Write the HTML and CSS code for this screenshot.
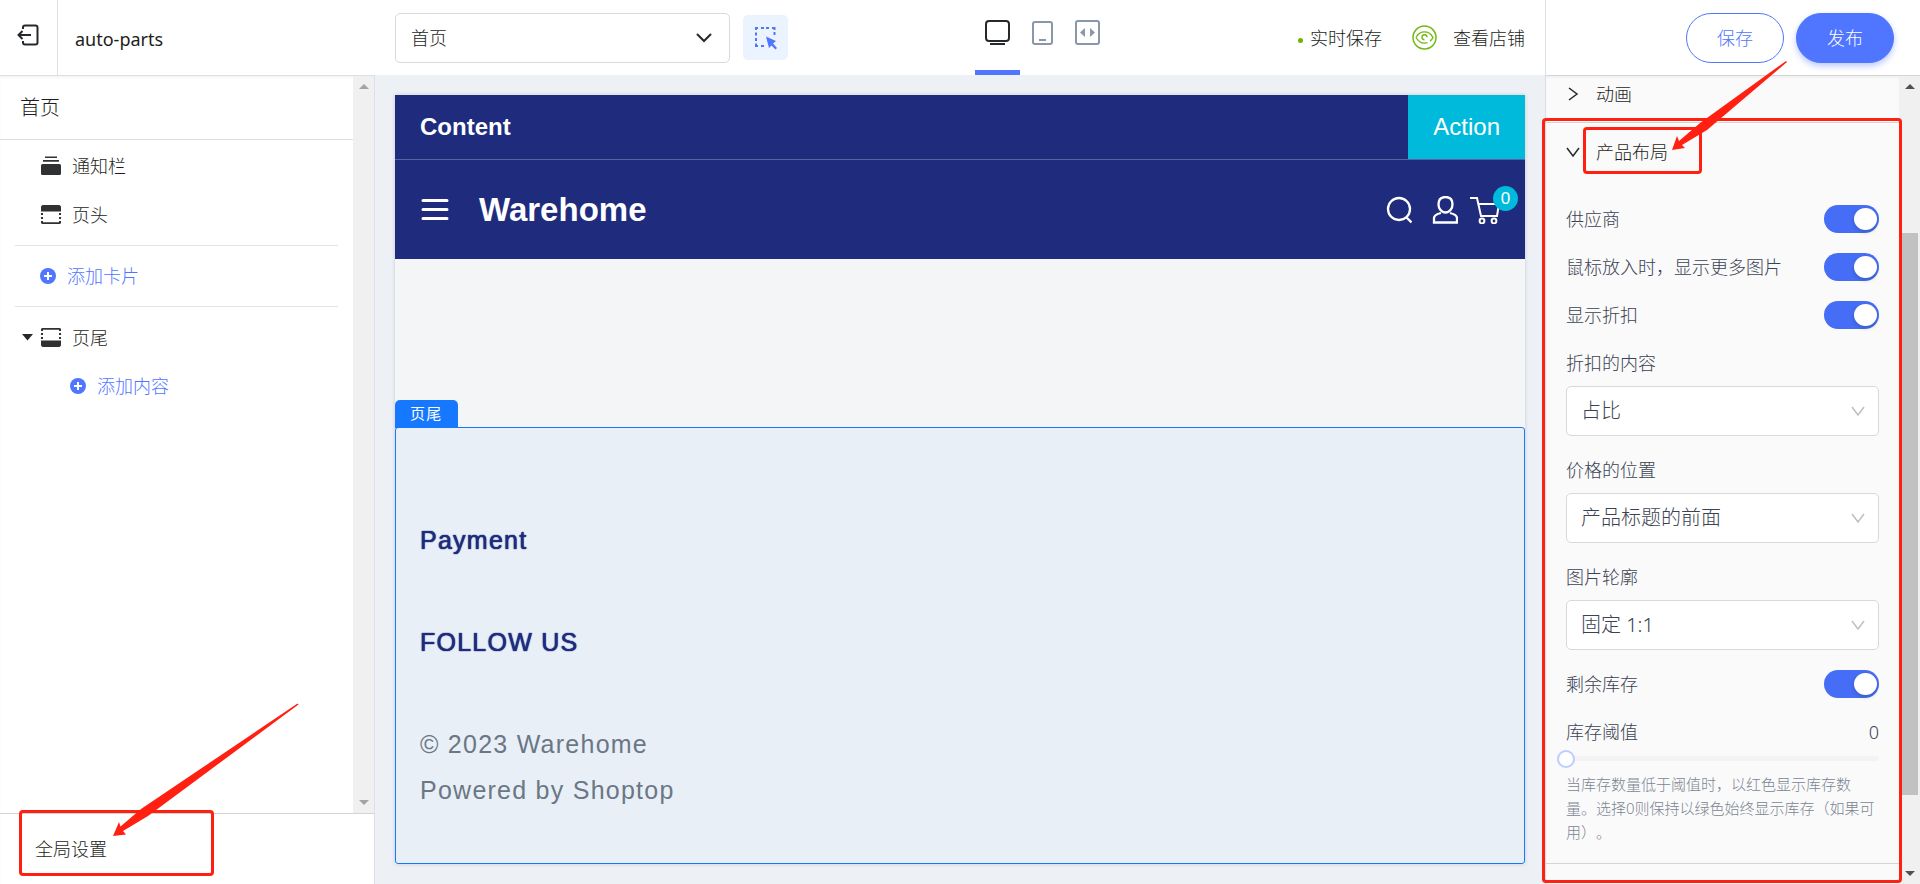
FILE: index.html
```html
<!DOCTYPE html>
<html lang="zh-CN">
<head>
<meta charset="utf-8">
<title>auto-parts</title>
<link rel="stylesheet" href="styles.css">
</head>
<body>
<div class="app">
  <header class="topbar">
    <div class="topbar-left">
      <button class="exit" aria-label="退出">
        <svg width="22" height="22" viewBox="0 0 22 22" fill="none" stroke="#26292c" stroke-width="2"><path d="M6 5V3.500Q6 1.500 8 1.500H18.500Q20.500 1.500 20.500 3.500V18.500Q20.500 20.500 18.500 20.500H8Q6 20.500 6 18.500V17"/><path d="M14 11H2M5.500 7L1.500 11L5.500 15"/></svg>
      </button>
      <span class="shop-name">auto-parts</span>
    </div>
    <div class="topbar-center">
      <div class="tools">
        <div class="select page-select">
          <select aria-label="页面"><option>首页</option></select>
          <svg class="select-arrow" width="16" height="10" viewBox="0 0 16 10" fill="none" stroke="#26292c" stroke-width="2" stroke-linecap="round"><path d="M1.500 1.500L8 8L14.500 1.500"/></svg>
        </div>
        <button class="picker" aria-label="选择元素">
          <svg width="23" height="24" viewBox="0 0 23 24"><path d="M2 4V2H4M7 2h3M12 2h3M18 2h2.500V4M20.500 6v3M2 6.500v3M2 12v3M2 17.500V20H4M7 20h3" fill="none" stroke="#5076ff" stroke-width="2"/><path d="M12 10.500L22 15L19 17.500L23 22L21.500 23.500L17.500 19.500L15 22Z" fill="#5076ff"/></svg>
        </button>
      </div>
      <nav class="devices">
        <button class="device active" aria-label="桌面"><svg width="25" height="25" viewBox="0 0 25 25" fill="none" stroke="#26292c" stroke-width="2"><rect x="1" y="1" width="23" height="20" rx="3"/><path d="M5 24H20"/></svg></button>
        <button class="device" aria-label="平板"><svg width="25" height="25" viewBox="0 0 25 25" fill="none" stroke="#8a97a8" stroke-width="2"><rect x="3" y="2" width="19" height="22" rx="2"/><path d="M9 20H16"/></svg></button>
        <button class="device" aria-label="代码"><svg width="25" height="25" viewBox="0 0 25 25" fill="none" stroke="#8a97a8" stroke-width="2"><rect x="1" y="1" width="23" height="23" rx="2"/><path d="M10 8V17L5 12.500ZM15 8V17L20 12.500Z" fill="#8a97a8" stroke="none"/></svg></button>
      </nav>
      <div class="status">
        <span class="dot"></span><span>实时保存</span>
        <a class="view" href="#"><svg width="25" height="25" viewBox="0 0 25 25" fill="none" stroke="#72b914" stroke-width="1.500"><circle cx="12.500" cy="12.500" r="11.500"/><path d="M4 12.500C8 5 17 5 21 12.500C20 14.500 19 15.500 18 16M4 12.500C7 17.500 11 19 15.500 17.700" stroke-width="1.400"/><path d="M12.500 14.800A2.500 2.500 0 1 1 15 12.200" stroke-width="1.400"/></svg><span>查看店铺</span></a>
      </div>
    </div>
    <div class="topbar-right">
      <button class="pill">保存</button>
      <button class="pill primary">发布</button>
    </div>
  </header>

  <main class="workspace">
    <aside class="sidebar">
      <div class="side-body">
        <div class="side-content">
          <h2 class="side-title">首页</h2>
          <ul class="sections">
            <li class="item"><svg width="20" height="19" viewBox="0 0 20 19" fill="#303133"><path d="M4 0.500H16V2H4ZM2 4H18V5.800H2Z"/><rect y="8" width="20" height="11" rx="1.500"/></svg>通知栏</li>
            <li class="item"><svg width="20" height="19" viewBox="0 0 20 19" fill="#303133"><path d="M1.500 0H18.500L20 1.500V6.500H0V1.500ZM0 8h2v2H0zM18 8h2v2h-2zM0 12h2v2H0zM18 12h2v2h-2zM0 16H2V17.200H18V16H20V18L19 19H1L0 18Z"/></svg>页头</li>
            <li class="rule"></li>
            <li><button class="add"><svg width="16" height="16" viewBox="0 0 16 16"><circle cx="8" cy="8" r="8" fill="#5076ff"/><path d="M8 4V12M4 8H12" stroke="#fff" stroke-width="2"/></svg>添加卡片</button></li>
            <li class="rule"></li>
            <li class="item footer-item"><svg class="caret" width="11" height="7" viewBox="0 0 11 7"><path d="M0 0H11L5.500 6.500Z" fill="#26292c"/></svg><svg width="20" height="19" viewBox="0 0 20 19" fill="#303133"><path d="M1 0H19L20 1V3H18V1.800H2V3H0V1ZM0 5h2v2H0zM18 5h2v2h-2zM0 9h2v2H0zM18 9h2v2h-2zM0 12.500H20V17.500L18.500 19H1.500L0 17.500Z"/></svg>页尾</li>
            <li><button class="add nested"><svg width="16" height="16" viewBox="0 0 16 16"><circle cx="8" cy="8" r="8" fill="#5076ff"/><path d="M8 4V12M4 8H12" stroke="#fff" stroke-width="2"/></svg>添加内容</button></li>
          </ul>
        </div>
        <div class="scrollbar"><span class="tri up"></span><span class="tri down"></span></div>
      </div>
      <div class="side-footer">
        <a class="global" href="#">全局设置</a>
        <div class="mark mark-global"></div>
        <svg class="arrow arrow-global" width="186" height="134" viewBox="0 0 186 134" fill="#ff2012"><path d="M0 133L6 119L7.500 123.500L28 106L184.500 0.500L185.500 1.500L35 113L10 128L13 131.500Z"/></svg>
      </div>
    </aside>

    <section class="canvas">
      <div class="preview">
        <div class="notice"><strong class="notice-text">Content</strong><a class="action" href="#">Action</a></div>
        <div class="store-header">
          <button class="icon-btn" aria-label="菜单"><svg width="29" height="23" viewBox="0 0 29 23" stroke="#fff" stroke-width="3" stroke-linecap="round"><path d="M3 2.500H27M3 11.500H27M3 20.500H27"/></svg></button>
          <h1 class="brand">Warehome</h1>
          <div class="store-icons">
            <button class="icon-btn" aria-label="搜索"><svg width="26" height="28" viewBox="0 0 26 28" fill="none" stroke="#fff" stroke-width="2.300"><circle cx="13" cy="13" r="11"/><path d="M20 21L25.500 26.500"/></svg></button>
            <button class="icon-btn" aria-label="账户"><svg width="26" height="28" viewBox="0 0 26 28" fill="none" stroke="#fff" stroke-width="2.300"><path d="M13.500 1C8.500 1 6.500 4.500 6.500 8.500C6.500 12 9 16.500 13.500 16.500C18 16.500 20.500 12 20.500 8.500C20.500 4.500 18.500 1 13.500 1Z"/><path d="M9 17C5 18 2 19 2 22V26.500H25V22C25 19 22 18 18 17"/></svg></button>
            <button class="icon-btn cart" aria-label="购物车"><svg width="30" height="28" viewBox="0 0 30 28" fill="none" stroke="#fff" stroke-width="2"><path d="M0 2H7L11 20H27L29 8H9"/><circle cx="12" cy="25" r="2.400"/><circle cx="24" cy="25" r="2.400"/></svg><span class="badge">0</span></button>
          </div>
        </div>
        <div class="blank"></div>
        <footer class="store-footer">
          <span class="tag">页尾</span>
          <h3 class="foot-title">Payment</h3>
          <h3 class="foot-title">FOLLOW US</h3>
          <p class="foot-text">© 2023 Warehome<br>Powered by Shoptop</p>
        </footer>
      </div>
    </section>

    <aside class="settings">
      <div class="settings-content">
        <button class="group first"><svg width="16" height="14" viewBox="0 0 16 14" fill="none" stroke="#26292c" stroke-width="1.500"><path d="M4 1L12 7L4 13"/></svg>动画</button>
        <button class="group open"><svg width="16" height="14" viewBox="0 0 16 14" fill="none" stroke="#26292c" stroke-width="1.500"><path d="M2 3L8 11L14 3"/></svg>产品布局</button>
        <div class="fields">
          <div class="row"><label for="vendor">供应商</label><input class="switch" id="vendor" type="checkbox" checked></div>
          <div class="row"><label for="hover">鼠标放入时，显示更多图片</label><input class="switch" id="hover" type="checkbox" checked></div>
          <div class="row"><label for="sale">显示折扣</label><input class="switch" id="sale" type="checkbox" checked></div>
          <div class="field"><label for="content">折扣的内容</label>
            <div class="select"><select id="content"><option>占比</option></select><svg class="select-arrow" width="14" height="10" viewBox="0 0 14 10" fill="none" stroke="#bfbfbf" stroke-width="1.500"><path d="M1 1L7 9L13 1"/></svg></div></div>
          <div class="field"><label for="price">价格的位置</label>
            <div class="select"><select id="price"><option>产品标题的前面</option></select><svg class="select-arrow" width="14" height="10" viewBox="0 0 14 10" fill="none" stroke="#bfbfbf" stroke-width="1.500"><path d="M1 1L7 9L13 1"/></svg></div></div>
          <div class="field"><label for="ratio">图片轮廓</label>
            <div class="select"><select id="ratio"><option>固定 1:1</option></select><svg class="select-arrow" width="14" height="10" viewBox="0 0 14 10" fill="none" stroke="#bfbfbf" stroke-width="1.500"><path d="M1 1L7 9L13 1"/></svg></div></div>
          <div class="row"><label for="stock">剩余库存</label><input class="switch" id="stock" type="checkbox" checked></div>
          <div class="threshold">
            <div class="row"><label for="limit">库存阈值</label><output for="limit">0</output></div>
            <input class="slider" id="limit" type="range" min="0" max="100" value="0">
            <p class="help">当库存数量低于阈值时，以红色显示库存数量。选择0则保持以绿色始终显示库存（如果可用）。</p>
          </div>
        </div>
      </div>
      <div class="scrollbar dark"><span class="tri up"></span><span class="thumb"></span><span class="tri down"></span></div>
      <div class="mark mark-panel"></div>
      <div class="mark mark-group"></div>
      <svg class="arrow arrow-group" width="116" height="90" viewBox="0 0 116 90" fill="#ff2012"><path d="M0 89L5 75L7 80L28 62L114 0L115 1L35 69L10 84L13 87Z"/></svg>
    </aside>
  </main>
</div>
</body>
</html>
```

FILE: styles.css
```css
* { box-sizing: border-box; margin: 0; padding: 0; }
body {
  font-family: "Noto Sans", "Noto Sans CJK SC", sans-serif;
  font-size: 18px;
  font-weight: 300;
  line-height: 28px;
  color: #1c1e21;
  background: #edf0f5;
}
button, select, input { font: inherit; color: inherit; }
button { background: none; border: 0; cursor: pointer; }
a { color: inherit; text-decoration: none; }
ul { list-style: none; }
svg { display: block; flex: none; }

.app { height: 100vh; display: flex; flex-direction: column; overflow: hidden; }

.topbar, .workspace { display: grid; grid-template-columns: 375px 1fr 375px; }
.topbar { height: 75px; background: #fff; }
.workspace { flex: 1; min-height: 0; }

.topbar-left { display: flex; align-items: center; }
.exit {
  align-self: stretch;
  width: 58px;
  padding: 0 0 6px 17px;
  border-right: 1px solid #dcdfe6;
}
.shop-name { padding: 3px 0 0 17px; font-weight: 400; }
.topbar-center {
  display: grid;
  grid-template-columns: minmax(0, 580px) auto 1fr;
  padding: 0 20px;
}
.tools { display: flex; align-items: center; gap: 13px; }
.select { position: relative; height: 50px; }
.select select {
  appearance: none;
  width: 100%;
  height: 100%;
  padding: 0 40px 0 14px;
  border: 1px solid #d9d9d9;
  border-radius: 5px;
  background: #fff;
  font-size: 20px;
}
.select-arrow { position: absolute; right: 14px; top: 20px; pointer-events: none; }
.page-select { width: 335px; }
.page-select select { font-size: 18px; padding-left: 15px; }
.page-select .select-arrow { right: 18px; }
.picker {
  display: grid;
  place-items: center;
  width: 45px;
  height: 45px;
  border-radius: 5px;
  background: #ebf3ff;
}
.devices { display: flex; }
.device {
  width: 45px;
  padding: 0 10px 5px;
  border-bottom: 5px solid transparent;
}
.device.active { border-color: #5076ff; }
.status { display: flex; align-items: center; justify-content: flex-end; }
.dot { width: 5px; height: 5px; margin: 5px 7px 0 0; border-radius: 50%; background: #72b300; }
.view { display: flex; align-items: center; gap: 16px; margin-left: 30px; }

.topbar-right {
  display: flex;
  align-items: center;
  justify-content: flex-end;
  gap: 12px;
  padding-right: 26px;
  border-left: 1px solid #dcdfe6;
}
.pill {
  width: 98px;
  height: 50px;
  border: 1px solid #5076ff;
  border-radius: 25px;
  color: #5076ff;
}
.pill.primary { background: #5076ff; color: #fff; box-shadow: 0 3px 6px #5076ff66; }

.sidebar {
  display: flex;
  flex-direction: column;
  min-height: 0;
  background: #fff;
  border-top: 1px solid #dcdfe6;
  border-right: 1px solid #dcdfe6;
  box-shadow: inset 0 2px 2px #0000000a;
}
.side-body { flex: 1; min-height: 0; display: flex; }
.side-content { flex: 1; }
.side-title {
  padding: 18px 20px 17px;
  border-bottom: 1px solid #dcdfe6;
  font-size: 20px;
  font-weight: 300;
}
.sections { padding-top: 1px; }
.item { display: flex; align-items: center; gap: 11px; height: 49px; padding-left: 41px; }
.rule { height: 1px; margin: 0 15px; background: #e3e3e3; }
.item + .rule { margin-top: 6px; }
.add { display: flex; align-items: center; gap: 11px; height: 60px; padding-left: 40px; color: #5076ff; }
.add.nested { height: 48px; padding-left: 70px; }
.footer-item { margin-top: 6px; padding-left: 22px; gap: 8px; }
.footer-item svg:nth-child(2) { margin-right: 3px; }

.scrollbar {
  display: flex;
  flex-direction: column;
  align-items: center;
  justify-content: space-between;
  width: 21px;
  padding: 8px 0;
  background: #f0f0f0;
}
.tri { border: 5px solid transparent; }
.tri.up { border-top: 0; border-bottom-color: #a3a3a3; }
.tri.down { border-bottom: 0; border-top-color: #a3a3a3; }
.dark .tri.up { border-bottom-color: #505050; }
.dark .tri.down { border-top-color: #505050; }
.thumb { width: 17px; height: 71%; margin: auto 0 76px; background: #c1c1c1; }

.side-footer {
  position: relative;
  padding: 21px 35px;
  border-top: 1px solid #d4d4d4;
}
.mark { position: absolute; border: 3px solid #ff2012; border-radius: 4px; pointer-events: none; }
.arrow { position: absolute; pointer-events: none; }
.mark-global { left: 19px; top: -4px; width: 195px; height: 66px; }
.arrow-global { left: 113px; bottom: 47px; }

.canvas { padding: 20px 20px 0; min-width: 0; }
.preview {
  display: flex;
  flex-direction: column;
  font-family: "Liberation Sans", "Noto Sans CJK SC", sans-serif;
  font-weight: 400;
  background: #f4f5f7;
  box-shadow: 0 0 4px #00000026;
}
.notice {
  display: flex;
  align-items: stretch;
  justify-content: space-between;
  background: #1f2c7d;
  color: #fff;
  border-bottom: 1px solid #5762a0;
}
.notice-text { padding: 18px 25px; font-size: 24px; }
.action { display: grid; place-items: center; padding: 0 25px; background: #00badb; font-size: 24px; }
.store-header {
  display: flex;
  align-items: center;
  height: 99px;
  padding: 0 25px;
  background: #1f2c7d;
  color: #fff;
}
.brand { margin-left: 30px; font-size: 33px; line-height: 40px; }
.store-icons { display: flex; align-items: center; gap: 20px; margin-left: auto; }
.cart { position: relative; margin-left: -8px; }
.badge {
  position: absolute;
  left: 23px;
  top: -10px;
  width: 25px;
  height: 25px;
  border-radius: 50%;
  background: #00badb;
  font-size: 17px;
  line-height: 25px;
}
.blank { height: 168px; }
.store-footer {
  position: relative;
  padding: 98px 24px 50px;
  border: 1px solid #1677ff;
  border-radius: 3px;
  background: #e8eff7;
  font-size: 25px;
  letter-spacing: 0.05em;
}
.tag {
  position: absolute;
  left: -1px;
  top: -28px;
  padding: 0 15px;
  border-radius: 5px 5px 0 0;
  background: #1677ff;
  color: #fff;
  font-size: 15px;
}
.foot-title {
  margin-bottom: 74px;
  font-size: 25px;
  font-weight: 400;
  color: #1f2c7d;
  text-shadow: 0 0 1px #1f2c7d, 0 0 1px #1f2c7d;
}
.foot-text { margin-top: -9px; line-height: 46px; color: #6b7785; }

.settings {
  position: relative;
  display: flex;
  border-top: 1px solid #d4d4d4;
  border-left: 1px solid #dcdfe6;
  background: #fafafa;
  box-shadow: inset 0 2px 2px #0000000a;
}
.settings-content { flex: 1; min-width: 0; }
.group { display: flex; align-items: center; gap: 15px; width: 100%; padding: 15px 19px 39px; }
.group.first { padding: 4px 19px 14px; border-bottom: 1px solid #d4d4d4; }
.fields {
  display: flex;
  flex-direction: column;
  gap: 20px;
  padding: 0 20px 19px;
  border-bottom: 1px solid #d4d4d4;
  color: #3b4252;
}
.row { display: flex; justify-content: space-between; }
.field { display: flex; flex-direction: column; gap: 9px; }
.switch {
  appearance: none;
  width: 55px;
  height: 28px;
  padding: 3px 2px;
  border-radius: 14px;
  background: #466df5;
}
.switch::before {
  content: "";
  display: block;
  width: 23px;
  height: 22px;
  margin-left: auto;
  border-radius: 50%;
  background: #fff;
  box-shadow: 0 2px 4px #00230b33;
}
.slider { display: block; appearance: none; width: 100%; height: 18px; margin: 3px 0 5px; background: none; }
.slider::-webkit-slider-runnable-track { height: 5px; border-radius: 3px; background: #f3f3f3; }
.slider::-webkit-slider-thumb {
  appearance: none;
  width: 18px;
  height: 18px;
  margin: -6px 0 0 -9px;
  border: 2px solid #bccfff;
  border-radius: 50%;
  background: #fff;
}
.help { font-size: 15px; line-height: 24px; color: #7b8593; text-spacing-trim: space-all; }
.mark-panel { left: -4px; top: 42px; width: 360px; bottom: 1px; }
.mark-group { left: 37px; top: 51px; width: 119px; height: 47px; }
.arrow-group { left: 126px; top: -15px; }
```
